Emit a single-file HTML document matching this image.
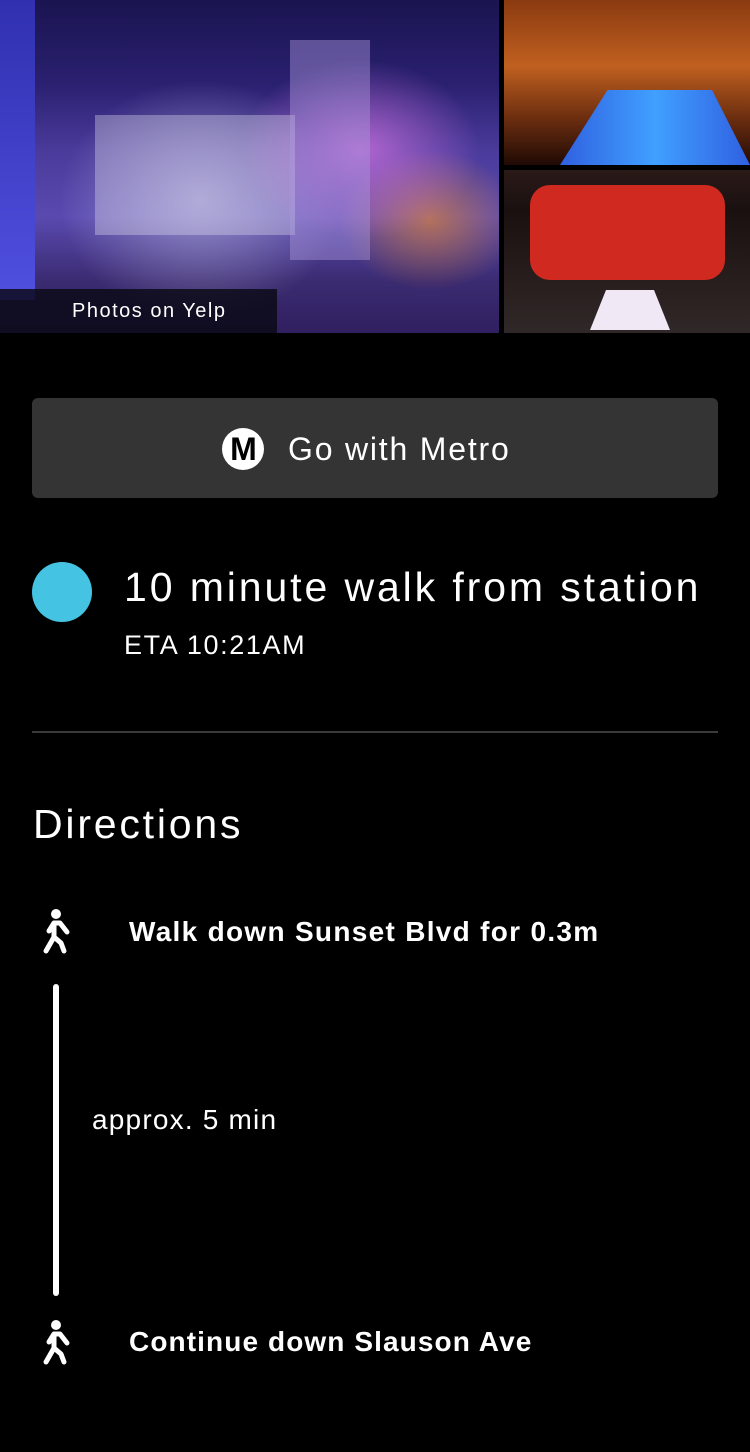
<!DOCTYPE html>
<html><head><style>
body{margin:0;width:750px;height:1452px;background:#000;overflow:hidden;font-family:"Liberation Sans",sans-serif;color:#fff;position:relative}
.a{position:absolute;white-space:nowrap}
</style></head><body>
<div class="a" style="left:0;top:0;width:499px;height:333px;background:
radial-gradient(ellipse 120px 90px at 360px 150px,rgba(220,120,230,.7),transparent),
radial-gradient(ellipse 90px 70px at 430px 220px,rgba(240,140,40,.6),transparent),
radial-gradient(ellipse 140px 120px at 200px 200px,rgba(200,200,230,.55),transparent),
linear-gradient(180deg,#1a1450 0%,#2a2070 25%,#4a3a9a 45%,#5a4ab0 65%,#3a2a70 85%,#302060 100%)"></div>
<div class="a" style="left:0;top:0;width:35px;height:300px;background:linear-gradient(180deg,#3030b0,#5050e0)"></div>
<div class="a" style="left:95px;top:115px;width:200px;height:120px;background:rgba(230,225,240,.35)"></div>
<div class="a" style="left:290px;top:40px;width:80px;height:220px;background:rgba(170,150,220,.45)"></div>
<div class="a" style="left:504px;top:0;width:246px;height:165px;background:
radial-gradient(ellipse 110px 40px at 610px 120px,rgba(80,150,255,.95),transparent),
linear-gradient(180deg,#8a3a10,#c06020 40%,#703010 70%,#200a05)"></div>
<div class="a" style="left:560px;top:90px;width:190px;height:75px;background:linear-gradient(90deg,#3060e0,#40a0ff,#3060e0);clip-path:polygon(25% 0,80% 0,100% 100%,0 100%)"></div>
<div class="a" style="left:504px;top:170px;width:246px;height:163px;background:linear-gradient(180deg,#2a1a18,#1a1010 25%,#2a2020 75%,#302828)"></div>
<div class="a" style="left:530px;top:185px;width:195px;height:95px;background:#d02a20;border-radius:20px"></div>
<div class="a" style="left:590px;top:290px;width:80px;height:40px;background:#f0e8f4;clip-path:polygon(20% 0,80% 0,100% 100%,0 100%)"></div>
<div class="a" style="left:0;top:289px;width:277px;height:44px;background:rgba(10,8,20,.82)"></div>
<div class="a" style="left:72px;top:300px;font-size:20px;letter-spacing:1.5px;color:#fff">Photos on Yelp</div>

<div class="a" style="left:32px;top:398px;width:686px;height:100px;background:#343434;border-radius:6px"></div>
<div class="a" style="left:222px;top:428px;width:42px;height:42px;border-radius:50%;background:#fff;color:#000;font-weight:bold;font-size:32px;line-height:42px;text-align:center;letter-spacing:-1px">M</div>
<div class="a" style="left:288px;top:429px;font-size:32px;line-height:40px;letter-spacing:1.8px">Go with Metro</div>

<div class="a" style="left:32px;top:562px;width:60px;height:60px;border-radius:50%;background:#45c3e3"></div>
<div class="a" style="left:124px;top:563px;font-size:41px;line-height:48px;letter-spacing:2.9px">10 minute walk from station</div>
<div class="a" style="left:124px;top:628px;font-size:27px;line-height:34px;letter-spacing:1.6px">ETA 10:21AM</div>
<div class="a" style="left:32px;top:731px;width:686px;height:2px;background:#3a3a3a"></div>
<div class="a" style="left:33px;top:800px;font-size:41px;line-height:48px;letter-spacing:2.8px">Directions</div>

<svg class="a" style="left:40px;top:907px" width="32" height="48" viewBox="0 0 32 48"><circle cx="16" cy="7" r="5" fill="#fff"/><path d="M9 24 L14 16 L20 16 L27 25 M14 16 L14 30 L6 44 M14 30 L21 36 L24 44" stroke="#fff" stroke-width="5" fill="none" stroke-linecap="round" stroke-linejoin="round"/></svg>
<div class="a" style="left:129px;top:914px;font-size:28px;font-weight:bold;line-height:36px;letter-spacing:1.3px">Walk down Sunset Blvd for 0.3m</div>
<div class="a" style="left:53px;top:984px;width:6px;height:312px;background:#fff;border-radius:3px"></div>
<div class="a" style="left:92px;top:1103px;font-size:28px;line-height:34px;letter-spacing:1.2px">approx. 5 min</div>
<svg class="a" style="left:40px;top:1318px" width="32" height="48" viewBox="0 0 32 48"><circle cx="16" cy="7" r="5" fill="#fff"/><path d="M9 24 L14 16 L20 16 L27 25 M14 16 L14 30 L6 44 M14 30 L21 36 L24 44" stroke="#fff" stroke-width="5" fill="none" stroke-linecap="round" stroke-linejoin="round"/></svg>
<div class="a" style="left:129px;top:1324px;font-size:28px;font-weight:bold;line-height:36px;letter-spacing:1.1px">Continue down Slauson Ave</div>
</body></html>
